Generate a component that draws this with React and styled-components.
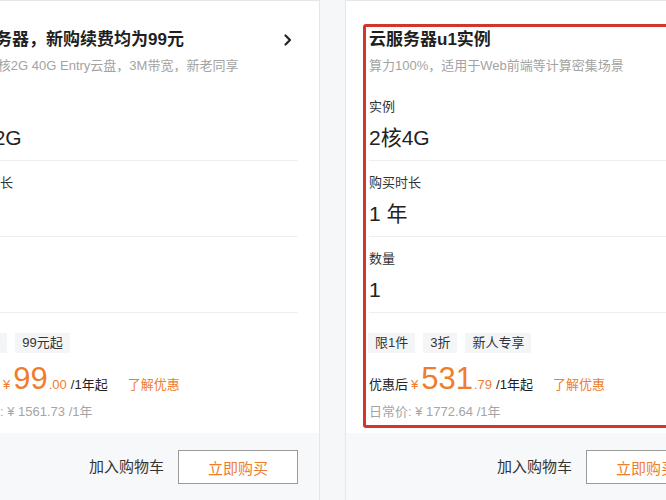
import React from 'react'
import styled, { createGlobalStyle } from 'styled-components'

const GlobalStyle = createGlobalStyle`
  html, body {
    margin: 0;
    padding: 0;
    width: 666px;
    height: 500px;
    overflow: hidden;
    background: #f6f7f9;
  }
  body {
    font-family: 'Liberation Sans', 'Noto Sans CJK SC', sans-serif;
    color: #333;
  }
`

const products = [
  {
    id: 'light',
    title: '云服务器，新购续费均为99元',
    desc: '轻量 2核2G 40G Entry云盘，3M带宽，新老同享',
    specs: [
      { label: '实例', value: '2核2G' },
      { label: '购买时长', value: '1 年' },
      { label: '数量', value: '1' }
    ],
    tags: ['限1件', '99元起'],
    price: '99',
    cents: '.00',
    unit: '/1年起',
    regular: '1561.73',
    more: true
  },
  {
    id: 'u1',
    title: '云服务器u1实例',
    desc: '算力100%，适用于Web前端等计算密集场景',
    specs: [
      { label: '实例', value: '2核4G' },
      { label: '购买时长', value: '1 年' },
      { label: '数量', value: '1' }
    ],
    tags: ['限1件', '3折', '新人专享'],
    price: '531',
    cents: '.79',
    unit: '/1年起',
    regular: '1772.64',
    highlight: true
  }
]

const Chevron = () => (
  <svg width="12" height="14" viewBox="0 0 12 14">
    <polyline
      points="3.5,2.5 8,7 3.5,11.5"
      fill="none"
      stroke="#222"
      strokeWidth="2.2"
      strokeLinecap="round"
      strokeLinejoin="round"
    />
  </svg>
)

const ProductCard = ({ item }) => (
  <Card>
    <Body highlight={item.highlight ? 1 : 0}>
      <TitleRow>
        <Title>{item.title}</Title>
        {item.more && <Chevron />}
      </TitleRow>
      <Desc>{item.desc}</Desc>
      <Specs>
        {item.specs.map(spec => (
          <Spec key={spec.label}>
            <SpecLabel>{spec.label}</SpecLabel>
            <SpecValue>{spec.value}</SpecValue>
          </Spec>
        ))}
      </Specs>
      <Tags>
        {item.tags.map(tag => (
          <Tag key={tag}>{tag}</Tag>
        ))}
      </Tags>
      <PriceRow>
        <PriceLabel>优惠后</PriceLabel>
        <Yen>¥</Yen>
        <Amount>{item.price}</Amount>
        <Cents>{item.cents}</Cents>
        <Unit>{item.unit}</Unit>
        <Promo>了解优惠</Promo>
      </PriceRow>
      <Regular>日常价: ¥ {item.regular} /1年</Regular>
    </Body>
    <Footer>
      <CartLink>加入购物车</CartLink>
      <BuyButton>立即购买</BuyButton>
    </Footer>
  </Card>
)

const App = () => (
  <>
    <GlobalStyle />
    <Row>
      {products.map(item => (
        <ProductCard key={item.id} item={item} />
      ))}
    </Row>
  </>
)

export default App

const orange = '#ef7d2d'

const Row = styled.div`
  display: flex;
  gap: 25px;
  margin-left: -63px;
  width: 800px;
`

const Card = styled.div`
  flex: 0 0 383px;
  box-sizing: border-box;
  display: flex;
  flex-direction: column;
  background: #fff;
  border: 1px solid #e4e6ea;
  height: 520px;
`

const Body = styled.div`
  position: relative;
  display: flex;
  flex-direction: column;
  padding: 27px 21px 11px 23px;

  &::after {
    content: '';
    display: ${props => (props.highlight ? 'block' : 'none')};
    position: absolute;
    top: 23px;
    left: 17px;
    right: 17px;
    bottom: 5px;
    border: 3px solid #d3352d;
    border-radius: 3px;
    pointer-events: none;
  }
`

const TitleRow = styled.div`
  display: flex;
  align-items: center;
  justify-content: space-between;

  > svg {
    margin-right: 4px;
  }
`

const Title = styled.h2`
  margin: 0;
  font-size: 17px;
  line-height: 24px;
  font-weight: bold;
  color: #1f1f1f;
  white-space: nowrap;
`

const Desc = styled.div`
  margin-top: 4px;
  font-size: 13px;
  line-height: 20px;
  color: #a3a3a3;
  white-space: nowrap;
`

const Specs = styled.div`
  margin-top: 9px;
  display: flex;
  flex-direction: column;
`

const Spec = styled.div`
  display: flex;
  flex-direction: column;
  gap: 6px;
  padding: 12px 0 8px;
  border-bottom: 1px solid #eeeff1;
`

const SpecLabel = styled.div`
  font-size: 13px;
  line-height: 20px;
  color: #333;
`

const SpecValue = styled.div`
  font-size: 21px;
  line-height: 29px;
  color: #222;
`

const Tags = styled.div`
  display: flex;
  gap: 8px;
  margin-top: 20px;
  margin-left: -1px;
`

const Tag = styled.span`
  padding: 0 7px;
  font-size: 13px;
  line-height: 20px;
  color: #333;
  background: #f4f5f7;
`

const PriceRow = styled.div`
  display: flex;
  align-items: baseline;
  margin-top: 8px;
  height: 36px;
  line-height: 36px;
  white-space: nowrap;
`

const PriceLabel = styled.span`
  font-size: 13px;
  color: #222;
`

const Yen = styled.span`
  margin: 0 3px;
  font-size: 13px;
  color: ${orange};
`

const Amount = styled.span`
  font-size: 31px;
  color: ${orange};
`

const Cents = styled.span`
  margin-left: 1px;
  font-size: 13px;
  color: ${orange};
`

const Unit = styled.span`
  margin-left: 4px;
  font-size: 13px;
  color: #222;
`

const Promo = styled.span`
  margin-left: 20px;
  font-size: 13px;
  color: ${orange};
`

const Regular = styled.div`
  margin-top: 5px;
  font-size: 13px;
  line-height: 20px;
  color: #a5a5a5;
  white-space: nowrap;
`

const Footer = styled.div`
  flex: 1;
  display: flex;
  align-items: flex-start;
  justify-content: flex-end;
  gap: 14px;
  padding: 17px 21px 0 23px;
  background: #f7f8fa;
`

const CartLink = styled.span`
  font-size: 15px;
  line-height: 34px;
  color: #333;
  cursor: pointer;
`

const BuyButton = styled.button`
  box-sizing: border-box;
  width: 120px;
  height: 34px;
  padding: 0;
  font-family: inherit;
  font-size: 15px;
  color: ${orange};
  background: #fff;
  border: 1px solid #9a9a9a;
  cursor: pointer;
`
